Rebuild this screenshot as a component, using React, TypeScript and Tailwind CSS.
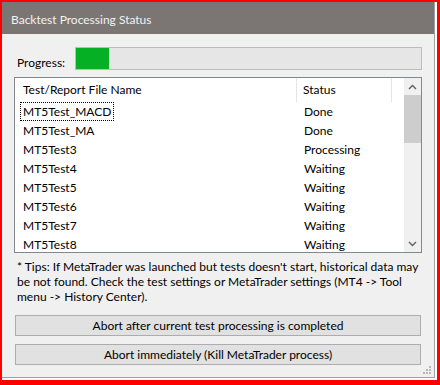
import React from "react";

const rows: [string, string][] = [
  ["MT5Test_MACD", "Done"],
  ["MT5Test_MA", "Done"],
  ["MT5Test3", "Processing"],
  ["MT5Test4", "Waiting"],
  ["MT5Test5", "Waiting"],
  ["MT5Test6", "Waiting"],
  ["MT5Test7", "Waiting"],
  ["MT5Test8", "Waiting"],
];

export default function App() {
  return (
    <div
      className="w-[440px] h-[385px] bg-[#ff0000] pl-[2px] pt-[2px] pr-[3px] pb-[5px] text-[12px] text-black"
      style={{ fontFamily: 'Lato, "Liberation Sans", Arial, sans-serif' }}
    >
      <div className="h-full bg-white pr-[2px] pb-[2px]">
        <div className="h-full border-r border-b border-[#a0a0a0] bg-[#f0f0f0] flex flex-col relative">
          {/* Title bar */}
          <div className="h-[32px] bg-[#7b7674] flex items-center pl-[9px] pt-[4px] text-[#f2f2f2] text-[12px] shrink-0">
            Backtest Processing Status
          </div>

          {/* Progress */}
          <div className="flex items-center mt-[13px] pl-[15px] pr-[12px] h-[23px]">
            <span className="w-[58px] mt-[8px]">Progress:</span>
            <div className="flex-1 h-[23px] border border-[#bcbcbc] bg-[#e6e6e6]">
              <div className="h-full w-[33px] bg-[#06b025]" />
            </div>
          </div>

          {/* List */}
          <div className="mt-[7px] ml-[12px] mr-[12px] h-[176px] border border-[#828790] bg-white flex overflow-hidden">
            <div className="flex-1 flex flex-col">
              <div className="h-[24px] flex items-center shrink-0">
                <div className="w-[282px] pl-[8px] border-r border-[#e5e5e5] h-full flex items-center">
                  Test/Report File Name
                </div>
                <div className="w-[95px] pl-[6px] border-r border-[#e5e5e5] h-full flex items-center">
                  Status
                </div>
              </div>
              {rows.map(([name, status], i) => (
                <div key={name} className="h-[19px] flex items-center shrink-0">
                  <div className="w-[282px] pl-[5px] h-full flex items-center">
                    <span
                      className={
                        "h-[19px] flex items-center px-[2px] border border-dotted " +
                        (i === 0 ? "border-black" : "border-transparent")
                      }
                    >
                      {name}
                    </span>
                  </div>
                  <div className="pl-[7px]">{status}</div>
                </div>
              ))}
            </div>
            {/* Scrollbar */}
            <div className="w-[17px] bg-[#f0f0f0] flex flex-col shrink-0">
              <div className="h-[17px] flex items-center justify-center">
                <svg width="9" height="6" viewBox="0 0 9 6">
                  <path d="M1 5 L4.5 1.5 L8 5" fill="none" stroke="#606060" strokeWidth="1.4" />
                </svg>
              </div>
              <div className="h-[48px] bg-[#cdcdcd]" />
              <div className="flex-1" />
              <div className="h-[17px] flex items-center justify-center">
                <svg width="9" height="6" viewBox="0 0 9 6">
                  <path d="M1 1 L4.5 4.5 L8 1" fill="none" stroke="#606060" strokeWidth="1.4" />
                </svg>
              </div>
            </div>
          </div>

          {/* Tips */}
          <div className="mt-[6px] pl-[15px] leading-[15px]">
            <div>* Tips: If MetaTrader was launched but tests doesn't start, historical data may</div>
            <div>be not found. Check the test settings or MetaTrader settings (MT4 -&gt; Tool</div>
            <div>menu -&gt; History Center).</div>
          </div>

          {/* Buttons */}
          <div className="mt-[11px] ml-[13px] mr-[13px] flex flex-col gap-[8px]">
            <button className="h-[21px] border border-[#adadad] bg-[#e1e1e1] flex items-center justify-center">
              Abort after current test processing is completed
            </button>
            <button className="h-[21px] border border-[#adadad] bg-[#e1e1e1] flex items-center justify-center">
              Abort immediately (Kill MetaTrader process)
            </button>
          </div>

          {/* Resize grip */}
          <svg className="absolute right-[2px] bottom-[2px]" width="10" height="10" viewBox="0 0 10 10">
            {[
              [7, 1],
              [4, 4],
              [7, 4],
              [1, 7],
              [4, 7],
              [7, 7],
            ].map(([x, y], i) => (
              <rect key={i} x={x} y={y} width="2" height="2" fill="#b8b8b8" />
            ))}
          </svg>
        </div>
      </div>
    </div>
  );
}
